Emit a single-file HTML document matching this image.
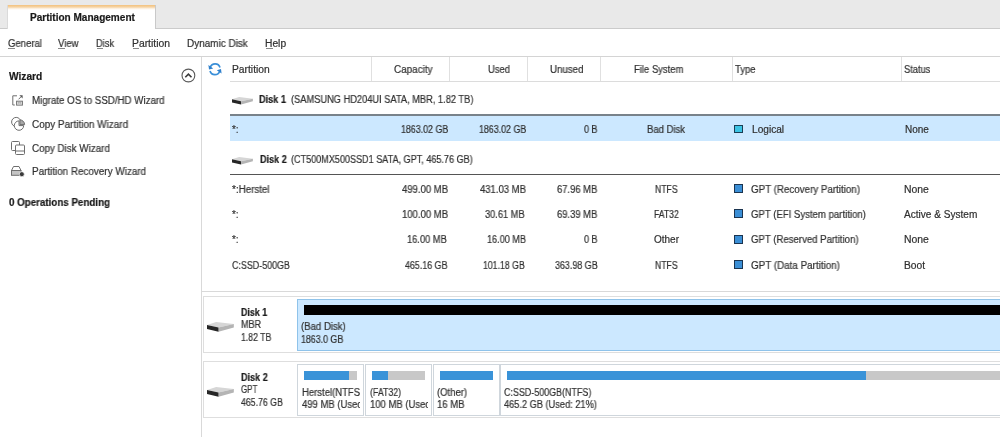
<!DOCTYPE html>
<html><head><meta charset="utf-8">
<style>
*{margin:0;padding:0;box-sizing:border-box}
html,body{width:1000px;height:437px;overflow:hidden;background:#fff}
body{position:relative;font-family:"Liberation Sans",sans-serif;font-size:10px;color:#303030;line-height:12px}
.t{position:absolute;white-space:nowrap;transform-origin:0 0;line-height:12px;will-change:transform;-webkit-text-stroke:0.2px currentColor}
.clip{position:absolute;overflow:hidden}
.ln{position:absolute}
svg{position:absolute;overflow:visible}
</style></head><body>

<!-- tab bar -->
<div class="ln" style="left:0;top:0;width:1000px;height:29px;background:#e9e9e9;border-bottom:1px solid #cbcbcb"></div>
<div class="ln" style="left:7px;top:5px;width:149px;height:24px;background:#fff;border-left:1px solid #dadada;border-right:1px solid #c9c9c9"></div>
<div class="ln" style="left:8px;top:5px;width:147px;height:5px;background:linear-gradient(#f2c07c,#f6d3a2 40%,#fdf3e6 75%,#fff)"></div>

<!-- menu -->
<div class="ln" style="left:0;top:56px;width:1000px;height:1px;background:#d4d4d4"></div>

<!-- left panel -->
<div class="ln" style="left:201px;top:57px;width:1px;height:380px;background:#d9d9d9"></div>

<!-- table header -->
<div class="ln" style="left:230px;top:81px;width:770px;height:1px;background:#dcdcdc"></div>
<div class="ln" style="left:371px;top:57px;width:1px;height:24px;background:#e0e0e0"></div>
<div class="ln" style="left:449px;top:57px;width:1px;height:24px;background:#e0e0e0"></div>
<div class="ln" style="left:527px;top:57px;width:1px;height:24px;background:#e0e0e0"></div>
<div class="ln" style="left:600px;top:57px;width:1px;height:24px;background:#e0e0e0"></div>
<div class="ln" style="left:732px;top:57px;width:1px;height:24px;background:#e0e0e0"></div>
<div class="ln" style="left:901px;top:57px;width:1px;height:24px;background:#e0e0e0"></div>

<!-- rows -->
<div class="ln" style="left:230px;top:114px;width:770px;height:2px;background:#78828a"></div>
<div class="ln" style="left:230px;top:116px;width:770px;height:25px;background:#cce8ff"></div>
<div class="ln" style="left:734px;top:125px;width:9px;height:8px;background:#3cc3e3;border:1px solid #1b3f55"></div>
<div class="ln" style="left:230px;top:174px;width:770px;height:1px;background:#555"></div>
<div class="ln" style="left:734px;top:184px;width:9px;height:9px;background:#3b8fd6;border:1px solid #1b3450"></div>
<div class="ln" style="left:734px;top:209px;width:9px;height:9px;background:#3b8fd6;border:1px solid #1b3450"></div>
<div class="ln" style="left:734px;top:235px;width:9px;height:9px;background:#3b8fd6;border:1px solid #1b3450"></div>
<div class="ln" style="left:734px;top:260px;width:9px;height:9px;background:#3b8fd6;border:1px solid #1b3450"></div>

<!-- divider -->
<div class="ln" style="left:202px;top:291px;width:798px;height:1px;background:#d9d9d9"></div>

<!-- disk map 1 -->
<div class="ln" style="left:203px;top:296px;width:800px;height:57px;border:1px solid #dedede"></div>
<div class="ln" style="left:297px;top:299px;width:710px;height:52px;background:#cce8ff;border:1px solid #8fc3ea"></div>
<div class="ln" style="left:304px;top:305px;width:700px;height:10px;background:#000"></div>

<!-- disk map 2 -->
<div class="ln" style="left:203px;top:361px;width:800px;height:57px;border:1px solid #dedede"></div>
<div class="ln" style="left:297px;top:364px;width:67px;height:52px;border:1px solid #cfd6dc"></div>
<div class="ln" style="left:304px;top:371px;width:53px;height:9px;background:#c8c8c8"></div>
<div class="ln" style="left:304px;top:371px;width:45px;height:9px;background:#3a93d8"></div>
<div class="ln" style="left:365px;top:364px;width:67px;height:52px;border:1px solid #cfd6dc"></div>
<div class="ln" style="left:372px;top:371px;width:53px;height:9px;background:#c8c8c8"></div>
<div class="ln" style="left:372px;top:371px;width:16px;height:9px;background:#3a93d8"></div>
<div class="ln" style="left:433px;top:364px;width:67px;height:52px;border:1px solid #cfd6dc"></div>
<div class="ln" style="left:440px;top:371px;width:53px;height:9px;background:#3a93d8"></div>
<div class="ln" style="left:500px;top:364px;width:510px;height:52px;border:1px solid #cfd6dc"></div>
<div class="ln" style="left:507px;top:371px;width:500px;height:9px;background:#c8c8c8"></div>
<div class="ln" style="left:507px;top:371px;width:359px;height:9px;background:#3a93d8"></div>

<!-- mnemonic underlines -->
<div class="ln" style="left:8px;top:48px;width:7px;height:1px;background:#888"></div>
<div class="ln" style="left:58px;top:48px;width:7px;height:1px;background:#888"></div>
<div class="ln" style="left:97px;top:48px;width:6px;height:1px;background:#888"></div>
<div class="ln" style="left:133px;top:48px;width:6px;height:1px;background:#888"></div>
<div class="ln" style="left:266px;top:48px;width:7px;height:1px;background:#888"></div>

<!-- collapse circle -->
<svg style="left:0;top:0" width="1000" height="437">
 <circle cx="188.4" cy="75.5" r="6.4" fill="none" stroke="#5a5a5a" stroke-width="1.1"/>
 <path d="M185.3 77.2 L188.4 74.1 L191.5 77.2" fill="none" stroke="#3a3a3a" stroke-width="1.6"/>
 <!-- refresh -->
 <g fill="none" stroke="#3a8fd8" stroke-width="1.7">
  <path d="M210.3 67.4 A5.1 5.1 0 0 1 220.0 67.6"/>
  <path d="M219.7 71.2 A5.1 5.1 0 0 1 210.0 71.0"/>
 </g>
 <path d="M208.4 65.0 L209.0 69.6 L213.2 68.4 Z" fill="#2f80cc"/>
 <path d="M221.6 73.6 L221.0 69.0 L216.8 70.2 Z" fill="#2f80cc"/>
 <!-- wizard icons -->
 <g fill="none" stroke="#6e6e6e" stroke-width="1">
  <path d="M17 95.8 H12.8 V105 H14.8"/>
  <path d="M18.6 99.3 L21 96.8"/>
  <rect x="16.6" y="101.2" width="5.8" height="3.9" />
  <rect x="18" y="102.5" width="3" height="1.3" stroke="#aaa" stroke-width="0.8"/>
  <circle cx="16.2" cy="122" r="4.6"/>
  <circle cx="19" cy="125.6" r="4.9" fill="#fff" stroke="none"/>
  <path d="M19 120.9 A4.7 4.7 0 1 0 23.7 125.6 H19 Z"/>
  <path d="M19.9 124.6 V119.9 A4.7 4.7 0 0 1 24.6 124.6 Z" fill="#a8a8a8"/>
  <rect x="11.5" y="141.5" width="8" height="9" rx="1"/>
  <rect x="15.5" y="145" width="9" height="9.5" rx="1" fill="#fff"/>
  <path d="M15.5 151 H24.5"/>
  <path d="M11.5 170.5 L13.5 166.5 H19 L21 170.5 Z"/>
 </g>
 <path d="M19.4 95.2 L22.6 95.2 L22.6 98.4 Z" fill="#555"/>
 <rect x="11.5" y="170.5" width="9.5" height="4.8" fill="#c4c4c4" stroke="#707070" stroke-width="1"/>
 
 <circle cx="21.8" cy="174.2" r="2.5" fill="#3a3a3a" stroke="#fff" stroke-width="0.7"/>
 
 <!-- disk icons -->
 <defs><g id="dk">
  <path d="M0 2.9 L9.1 0 L26.8 2.1 L11.5 5.6 Z" fill="#d6d6d6"/>
  <path d="M11.5 5.6 L26.8 2.1 L26.8 5.6 L11.5 9.7 Z" fill="#b4b4b4"/>
  <path d="M0 2.9 L11.5 5.6 L11.5 9.7 L0 7 Z" fill="#262626"/>
 </g></defs>
</svg>
<svg style="left:206.9px;top:322.1px" width="30" height="12"><use href="#dk"/></svg>
<svg style="left:206.9px;top:387px" width="30" height="12"><use href="#dk"/></svg>
<svg style="left:232px;top:97.4px" width="30" height="12"><g transform="scale(0.78)"><use href="#dk"/></g></svg>
<svg style="left:232px;top:156.6px" width="30" height="12"><g transform="scale(0.78)"><use href="#dk"/></g></svg>

<div class="t" id="t0" style="left:29.60px;top:12.00px;font-weight:bold;color:#1a1a1a;transform:scaleX(1.0038);">Partition Management</div>
<div class="t" id="t1" style="left:7.61px;top:37.50px;transform:scaleX(0.9543);">General</div>
<div class="t" id="t2" style="left:58.02px;top:37.50px;transform:scaleX(0.9545);">View</div>
<div class="t" id="t3" style="left:96.41px;top:37.50px;transform:scaleX(0.9250);">Disk</div>
<div class="t" id="t4" style="left:132.38px;top:37.50px;transform:scaleX(1.0361);">Partition</div>
<div class="t" id="t5" style="left:187.39px;top:37.50px;transform:scaleX(0.9934);">Dynamic Disk</div>
<div class="t" id="t6" style="left:265.38px;top:37.50px;transform:scaleX(1.0250);">Help</div>
<div class="t" id="t7" style="left:8.80px;top:70.60px;font-weight:bold;color:#1a1a1a;transform:scaleX(1.0188);">Wizard</div>
<div class="t" id="t8" style="left:32.20px;top:95.40px;transform:scaleX(0.9735);">Migrate OS to SSD/HD Wizard</div>
<div class="t" id="t9" style="left:32.20px;top:119.00px;transform:scaleX(0.9938);">Copy Partition Wizard</div>
<div class="t" id="t10" style="left:32.20px;top:142.60px;transform:scaleX(0.9797);">Copy Disk Wizard</div>
<div class="t" id="t11" style="left:32.20px;top:166.00px;transform:scaleX(0.9861);">Partition Recovery Wizard</div>
<div class="t" id="t12" style="left:8.78px;top:196.60px;font-weight:bold;color:#1a1a1a;transform:scaleX(0.9767);">0 Operations Pending</div>
<div class="t" id="t13" style="left:232.00px;top:64.00px;transform:scaleX(1.0278);">Partition</div>
<div class="t" id="t14" style="left:393.60px;top:64.00px;transform:scaleX(0.9872);">Capacity</div>
<div class="t" id="t15" style="left:488.41px;top:64.00px;transform:scaleX(0.9391);">Used</div>
<div class="t" id="t16" style="left:549.59px;top:64.00px;transform:scaleX(0.9706);">Unused</div>
<div class="t" id="t17" style="left:634.00px;top:64.00px;transform:scaleX(0.9462);">File System</div>
<div class="t" id="t18" style="left:735.38px;top:64.00px;transform:scaleX(0.9524);">Type</div>
<div class="t" id="t19" style="left:904.00px;top:64.00px;transform:scaleX(0.9286);">Status</div>
<div class="t" id="t20" style="left:259.00px;top:94.40px;font-weight:bold;color:#1a1a1a;transform:scaleX(0.9133);">Disk 1</div>
<div class="t" id="t21" style="left:290.76px;top:94.40px;transform:scaleX(0.9269);">(SAMSUNG HD204UI SATA, MBR, 1.82 TB)</div>
<div class="t" id="t22" style="left:232.03px;top:123.70px;transform:scaleX(0.9500);">*:</div>
<div class="t" id="t23" style="left:400.56px;top:123.70px;transform:scaleX(0.8849);">1863.02 GB</div>
<div class="t" id="t24" style="left:478.56px;top:123.70px;transform:scaleX(0.8849);">1863.02 GB</div>
<div class="t" id="t25" style="left:584.00px;top:123.70px;transform:scaleX(0.8933);">0 B</div>
<div class="t" id="t26" style="left:647.38px;top:123.70px;transform:scaleX(0.9500);">Bad Disk</div>
<div class="t" id="t27" style="left:751.59px;top:123.70px;transform:scaleX(1.0129);">Logical</div>
<div class="t" id="t28" style="left:904.60px;top:123.70px;">None</div>
<div class="t" id="t29" style="left:259.75px;top:153.80px;font-weight:bold;color:#1a1a1a;transform:scaleX(0.9067);">Disk 2</div>
<div class="t" id="t30" style="left:290.62px;top:153.80px;transform:scaleX(0.9070);">(CT500MX500SSD1 SATA, GPT, 465.76 GB)</div>
<div class="t" id="t31" style="left:232.39px;top:183.60px;transform:scaleX(0.9816);">*:Herstel</div>
<div class="t" id="t32" style="left:401.80px;top:183.60px;transform:scaleX(0.9521);">499.00 MB</div>
<div class="t" id="t33" style="left:479.61px;top:183.60px;transform:scaleX(0.9500);">431.03 MB</div>
<div class="t" id="t34" style="left:557.38px;top:183.60px;transform:scaleX(0.9395);">67.96 MB</div>
<div class="t" id="t35" style="left:655.00px;top:183.60px;transform:scaleX(0.8654);">NTFS</div>
<div class="t" id="t36" style="left:751.01px;top:183.60px;transform:scaleX(0.9775);">GPT (Recovery Partition)</div>
<div class="t" id="t37" style="left:904.00px;top:183.60px;transform:scaleX(1.0417);">None</div>
<div class="t" id="t38" style="left:232.03px;top:208.60px;transform:scaleX(0.9500);">*:</div>
<div class="t" id="t39" style="left:401.80px;top:208.60px;transform:scaleX(0.9521);">100.00 MB</div>
<div class="t" id="t40" style="left:485.41px;top:208.60px;transform:scaleX(0.9233);">30.61 MB</div>
<div class="t" id="t41" style="left:557.38px;top:208.60px;transform:scaleX(0.9395);">69.39 MB</div>
<div class="t" id="t42" style="left:654.00px;top:208.60px;transform:scaleX(0.8621);">FAT32</div>
<div class="t" id="t43" style="left:751.02px;top:208.60px;transform:scaleX(0.9583);">GPT (EFI System partition)</div>
<div class="t" id="t44" style="left:904.00px;top:208.60px;transform:scaleX(1.0068);">Active &amp; System</div>
<div class="t" id="t45" style="left:232.03px;top:234.20px;transform:scaleX(0.9500);">*:</div>
<div class="t" id="t46" style="left:407.41px;top:234.20px;transform:scaleX(0.9279);">16.00 MB</div>
<div class="t" id="t47" style="left:486.57px;top:234.20px;transform:scaleX(0.9093);">16.00 MB</div>
<div class="t" id="t48" style="left:584.18px;top:234.20px;transform:scaleX(0.9000);">0 B</div>
<div class="t" id="t49" style="left:654.00px;top:234.20px;">Other</div>
<div class="t" id="t50" style="left:751.02px;top:234.20px;transform:scaleX(0.9598);">GPT (Reserved Partition)</div>
<div class="t" id="t51" style="left:904.00px;top:234.20px;transform:scaleX(1.0417);">None</div>
<div class="t" id="t52" style="left:232.05px;top:259.60px;transform:scaleX(0.8908);">C:SSD-500GB</div>
<div class="t" id="t53" style="left:405.00px;top:259.60px;transform:scaleX(0.8875);">465.16 GB</div>
<div class="t" id="t54" style="left:483.06px;top:259.60px;transform:scaleX(0.8729);">101.18 GB</div>
<div class="t" id="t55" style="left:554.62px;top:259.60px;transform:scaleX(0.8917);">363.98 GB</div>
<div class="t" id="t56" style="left:655.00px;top:259.60px;transform:scaleX(0.8654);">NTFS</div>
<div class="t" id="t57" style="left:751.01px;top:259.60px;transform:scaleX(0.9833);">GPT (Data Partition)</div>
<div class="t" id="t58" style="left:904.00px;top:259.60px;transform:scaleX(1.0238);">Boot</div>
<div class="t" id="t59" style="left:240.62px;top:306.60px;font-weight:bold;color:#1a1a1a;transform:scaleX(0.8867);">Disk 1</div>
<div class="t" id="t60" style="left:240.62px;top:319.00px;transform:scaleX(0.9045);">MBR</div>
<div class="t" id="t61" style="left:240.62px;top:331.80px;transform:scaleX(0.8686);">1.82 TB</div>
<div class="t" id="t62" style="left:301.21px;top:321.00px;transform:scaleX(0.9587);">(Bad Disk)</div>
<div class="t" id="t63" style="left:301.24px;top:333.50px;transform:scaleX(0.8833);">1863.0 GB</div>
<div class="t" id="t64" style="left:240.62px;top:371.60px;font-weight:bold;color:#1a1a1a;transform:scaleX(0.9067);">Disk 2</div>
<div class="t" id="t65" style="left:240.64px;top:384.20px;transform:scaleX(0.8000);">GPT</div>
<div class="t" id="t66" style="left:240.62px;top:396.80px;transform:scaleX(0.8750);">465.76 GB</div>
<div class="clip" style="left:297.5px;top:385.00px;width:62.00px;height:16px"><div class="t" id="t67" style="left:4.11px;top:2px;transform:scaleX(0.9500);">Herstel(NTFS)</div></div>
<div class="clip" style="left:297.5px;top:396.50px;width:62.00px;height:16px"><div class="t" id="t68" style="left:4.11px;top:2px;transform:scaleX(0.9500);">499 MB (Used: 86%)</div></div>
<div class="clip" style="left:365.5px;top:385.00px;width:62.00px;height:16px"><div class="t" id="t69" style="left:4.12px;top:2px;transform:scaleX(0.8771);">(FAT32)</div></div>
<div class="clip" style="left:365.5px;top:396.50px;width:62.00px;height:16px"><div class="t" id="t70" style="left:4.11px;top:2px;transform:scaleX(0.9500);">100 MB (Used: 30%)</div></div>
<div class="t" id="t71" style="left:437.02px;top:387.00px;transform:scaleX(0.9500);">(Other)</div>
<div class="t" id="t72" style="left:437.02px;top:398.50px;transform:scaleX(0.9500);">16 MB</div>
<div class="t" id="t73" style="left:504.42px;top:386.50px;transform:scaleX(0.8929);">C:SSD-500GB(NTFS)</div>
<div class="t" id="t74" style="left:504.41px;top:398.60px;transform:scaleX(0.9230);">465.2 GB (Used: 21%)</div>

</body></html>
